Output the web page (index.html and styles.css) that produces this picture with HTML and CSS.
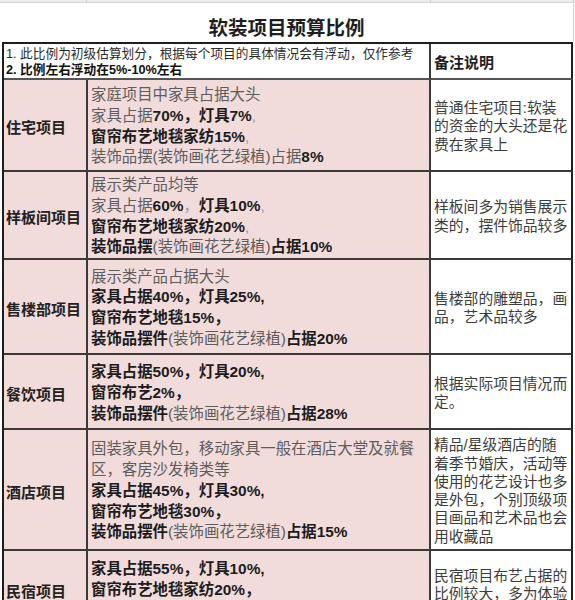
FILE: index.html
```html
<!DOCTYPE html>
<html lang="zh-CN">
<head>
<meta charset="utf-8">
<title>软装项目预算比例</title>
<link rel="stylesheet" href="styles.css">
</head>
<body>
<div class="sheet">
  <div class="topband"><span class="tb1"></span><span class="tb2"></span><span class="tb3"></span></div>
  <div class="title">软装项目预算比例</div>
  <table class="budget">
    <colgroup><col class="c1"><col class="c2"><col class="c3"></colgroup>
    <tr class="r-note">
      <td class="note" colspan="2">1. 此比例为初级估算划分，根据每个项目的具体情况会有浮动，仅作参考<br><b>2. 比例左右浮动在5%-10%左右</b></td>
      <td class="head">备注说明</td>
    </tr>
    <tr class="r1">
      <td class="label">住宅项目</td>
      <td class="body">家庭项目中家具占据大头<br>家具占据<b>70%，灯具7%</b><span class="lt">,</span><br><b>窗帘布艺地毯家纺15%</b><span class="lt">,</span><br>装饰品摆(装饰画花艺绿植)占据<b>8%</b></td>
      <td class="rem">普通住宅项目:软装<br>的资金的大头还是花<br>费在家具上</td>
    </tr>
    <tr class="r2">
      <td class="label">样板间项目</td>
      <td class="body">展示类产品均等<br>家具占据<b>60%</b><span class="lt">，</span><b>灯具10%</b><span class="lt">,</span><br><b>窗帘布艺地毯家纺20%</b><span class="lt">,</span><br><b>装饰品摆</b>(装饰画花艺绿植)<b>占据10%</b></td>
      <td class="rem">样板间多为销售展示<br>类的，摆件饰品较多</td>
    </tr>
    <tr class="r3">
      <td class="label">售楼部项目</td>
      <td class="body">展示类产品占据大头<br><b>家具占据40%，灯具25%,</b><br><b>窗帘布艺地毯15%，</b><br><b>装饰品摆件</b>(装饰画花艺绿植)<b>占据20%</b></td>
      <td class="rem">售楼部的雕塑品，画<br>品，艺术品较多</td>
    </tr>
    <tr class="r4">
      <td class="label">餐饮项目</td>
      <td class="body"><b>家具占据50%，灯具20%,</b><br><b>窗帘布艺2%，</b><br><b>装饰品摆件</b>(装饰画花艺绿植)<b>占据28%</b></td>
      <td class="rem">根据实际项目情况而<br>定。</td>
    </tr>
    <tr class="r5">
      <td class="label">酒店项目</td>
      <td class="body">固装家具外包，移动家具一般在酒店大堂及就餐<br>区，客房沙发椅类等<br><b>家具占据45%，灯具30%,</b><br><b>窗帘布艺地毯30%，</b><br><b>装饰品摆件</b>(装饰画花艺绿植)<b>占据15%</b></td>
      <td class="rem">精品/星级酒店的随<br>着季节婚庆，活动等<br>使用的花艺设计也多<br>是外包，个别顶级项<br>目画品和艺术品也会<br>用收藏品</td>
    </tr>
    <tr class="r6">
      <td class="label">民宿项目</td>
      <td class="body last-body"><b>家具占据55%，灯具10%,</b><br><b>窗帘布艺地毯家纺20%，</b></td>
      <td class="rem last-rem">民宿项目布艺占据的<br>比例较大，多为体验</td>
    </tr>
  </table>
</div>
</body>
</html>
```
FILE: styles.css
```css
* { box-sizing: border-box; }
html, body { margin: 0; padding: 0; background: #ffffff; }
body { font-family: "Liberation Sans", "Noto Sans CJK SC", sans-serif; color: #222; }

.sheet { width: 575px; height: 600px; overflow: hidden; }

.topband { display: flex; height: 3px; background: #ececec; border-bottom: 1px solid #d6d6d6; }
.tb1 { width: 87px; border-right: 1px solid #cfcfcf; }
.tb2 { width: 344px; border-right: 1px solid #cfcfcf; }
.tb3 { width: 143px; border-right: 1px solid #cfcfcf; }

.title {
  width: 574px;
  height: 39px;
  padding-top: 11px;
  text-align: center;
  font-family: "Noto Sans CJK SC", sans-serif;
  font-weight: 700;
  font-size: 19.5px;
  line-height: 26px;
  color: #1e1e1e;
  border-right: 1px solid #d4d4d4;
}

.budget {
  margin-left: 2px;
  width: 571px;
  table-layout: fixed;
  border-collapse: separate;
  border-spacing: 0;
  border-top: 2px solid #1e1e1e;
  border-left: 2px solid #1e1e1e;
}
.c1 { width: 84px; }
.c2 { width: 343px; }
.c3 { width: 142px; }

.budget td {
  padding: 3px 0 0 3px;
  vertical-align: middle;
  border-right: 2px solid #3a3a3a;
  border-bottom: 2px solid #3a3a3a;
  background: #f2dcdb;
}
.budget td.rem, .budget td.head { border-right-color: #1e1e1e; background: #ffffff; }

.r-note { height: 36px; }
.r1 { height: 92px; }
.r2 { height: 88px; }
.r3 { height: 95px; }
.r4 { height: 75px; }
.r5 { height: 121px; }
.r6 { height: 78px; }

.budget td.note {
  background: #ffffff;
  padding: 2px 0 0 2px;
  font-size: 12.7px;
  line-height: 16px;
  color: #2a2a2a;
  border-bottom-color: #555;
  white-space: nowrap;
}
.budget td.note b { color: #111; }
.budget td.head {
  font-size: 15px;
  font-weight: 700;
  color: #1e1e1e;
  padding: 0 0 0 3px;
  border-bottom-color: #555;
}

.budget td.label {
  padding-left: 2px;
  font-size: 15px;
  font-weight: 700;
  color: #222;
  white-space: nowrap;
}

.budget td.body {
  font-size: 15.4px;
  line-height: 20.8px;
  color: #5c5c5c;
  white-space: nowrap;
}
.budget td.body b { color: #1c1c1c; font-weight: 700; }
.lt { color: #9a9a9a; }

.budget td.rem {
  font-size: 14.8px;
  line-height: 18.3px;
  color: #3c3c3c;
  white-space: nowrap;
  overflow: hidden;
}

.budget td.last-body { padding-bottom: 22px; }
.budget td.last-rem { padding-bottom: 11px; }
```
